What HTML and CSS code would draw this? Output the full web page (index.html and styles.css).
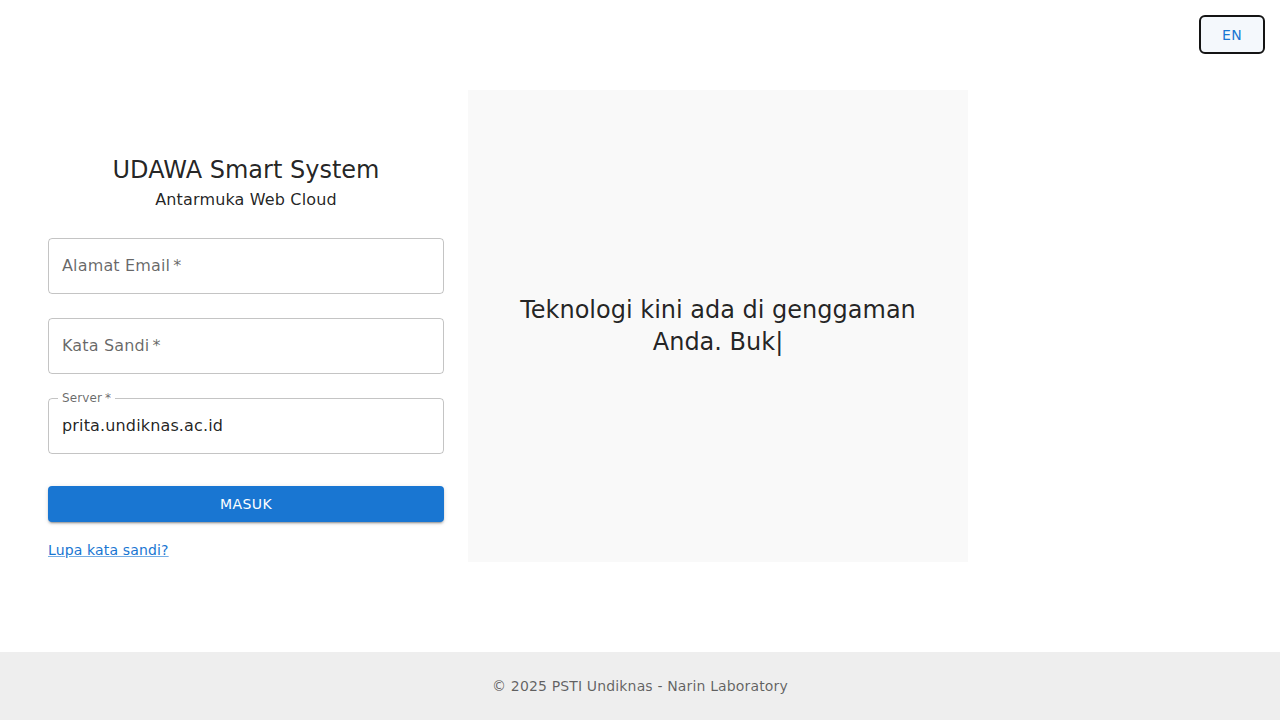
FILE: index.html
```html
<!DOCTYPE html>
<html lang="id">
<head>
<meta charset="utf-8">
<title>UDAWA Smart System</title>
<link rel="stylesheet" href="styles.css">
</head>
<body>
<div class="page">
  <button class="lang-btn" type="button">EN</button>
  <main class="main">
    <div class="content">
      <section class="login">
        <h1 class="title">UDAWA Smart System</h1>
        <p class="subtitle">Antarmuka Web Cloud</p>
        <div class="field">
          <span class="field-label">Alamat Email<span class="req">*</span></span>
        </div>
        <div class="field">
          <span class="field-label">Kata Sandi<span class="req">*</span></span>
        </div>
        <fieldset class="field field-filled">
          <legend class="legend">Server<span class="req">*</span></legend>
          <span class="field-value">prita.undiknas.ac.id</span>
        </fieldset>
        <button class="submit" type="button">MASUK</button>
        <a class="forgot" href="#">Lupa kata sandi?</a>
      </section>
      <section class="panel">
        <p class="tagline">Teknologi kini ada di genggaman Anda. Buk|</p>
      </section>
    </div>
  </main>
  <footer class="footer">© 2025 PSTI Undiknas - Narin Laboratory</footer>
</div>
</body>
</html>
```

FILE: styles.css
```css
* { box-sizing: border-box; }
html, body { margin: 0; padding: 0; }
body {
  font-family: "DejaVu Sans", "Noto Sans", sans-serif;
  color: rgba(0,0,0,0.87);
  background: #fff;
}
.page {
  position: relative;
  min-height: 720px;
  display: flex;
  flex-direction: column;
}
.lang-btn {
  position: absolute;
  top: 15px;
  right: 15px;
  width: 66px;
  height: 39px;
  border: 2px solid #141414;
  border-radius: 6px;
  background: #f4f8fc;
  color: #1976d2;
  font-family: inherit;
  font-size: 14px;
  letter-spacing: 0.4px;
  padding: 0;
}
.main {
  height: 652px;
  display: flex;
  align-items: center;
}
.content {
  display: flex;
  gap: 24px;
  padding-left: 48px;
}
.login {
  width: 396px;
  padding-top: 64px;
  display: flex;
  flex-direction: column;
}
.title {
  margin: 0;
  font-size: 24px;
  font-weight: normal;
  line-height: 32px;
  text-align: center;
  color: rgba(0,0,0,0.87);
}
.subtitle {
  margin: 2px 0 26px;
  font-size: 16px;
  line-height: 24px;
  letter-spacing: 0.15px;
  text-align: center;
}
.field {
  height: 56px;
  margin: 0 0 24px;
  padding: 0 13px 2px;
  border: 1px solid rgba(0,0,0,0.23);
  border-radius: 4px;
  display: flex;
  align-items: center;
  min-width: 0;
}
.field-label {
  font-size: 16px;
  letter-spacing: 0.15px;
  color: rgba(0,0,0,0.6);
}
.req { margin-left: 3px; }
.field-filled {
  display: block;
  height: 62px;
  margin-top: -6px;
  margin-bottom: 32px;
  padding: 0 13px;
}
.legend {
  font-size: 12px;
  line-height: 12px;
  padding: 0 4px;
  margin-left: -4px;
  letter-spacing: 0.1px;
  color: rgba(0,0,0,0.6);
}
.legend .req { margin-left: 3px; }
.field-value {
  display: block;
  margin-top: 10px;
  font-size: 16px;
  line-height: 24px;
  letter-spacing: 0.15px;
  color: rgba(0,0,0,0.87);
}
.submit {
  height: 36px;
  border: 0;
  border-radius: 4px;
  background: #1976d2;
  color: #fff;
  font-family: inherit;
  font-size: 14px;
  letter-spacing: 0.4px;
  box-shadow: 0 3px 1px -2px rgba(0,0,0,0.2), 0 2px 2px 0 rgba(0,0,0,0.14), 0 1px 5px 0 rgba(0,0,0,0.12);
}
.forgot {
  margin-top: 18px;
  align-self: flex-start;
  font-size: 14px;
  line-height: 20px;
  letter-spacing: 0.15px;
  color: #1976d2;
  text-decoration: underline;
  text-decoration-color: rgba(25,118,210,0.6);
}
.panel {
  width: 500px;
  height: 472px;
  background: #f9f9f9;
  display: flex;
  align-items: center;
  justify-content: center;
  padding: 0 48px;
}
.tagline {
  margin: 0;
  font-size: 24px;
  line-height: 32px;
  text-align: center;
  color: rgba(0,0,0,0.87);
}
.footer {
  height: 68px;
  background: #eeeeee;
  display: flex;
  align-items: center;
  justify-content: center;
  font-size: 14px;
  letter-spacing: 0.15px;
  color: rgba(0,0,0,0.6);
}
```
